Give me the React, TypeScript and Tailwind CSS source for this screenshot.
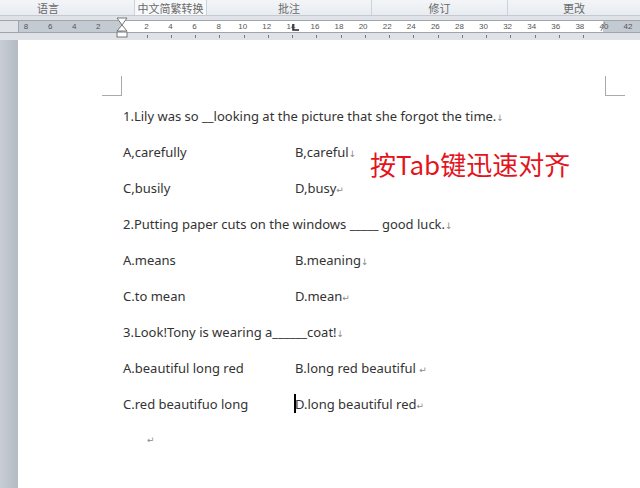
import React from "react";

const groups = [
  { label: "语言", w: "w-[135px]", cls: "justify-start pl-[37px]" },
  { label: "中文简繁转换", w: "w-[72px]", cls: "justify-center bg-[#f7f8fa]" },
  { label: "批注", w: "w-[165px]", cls: "justify-center" },
  { label: "修订", w: "w-[136px]", cls: "justify-center" },
  { label: "更改", w: "w-[132px]", cls: "justify-center" },
];

const leftNums = ["8", "6", "4", "2"];
const rightNums = ["2", "4", "6", "8", "10", "12", "14", "16", "18", "20", "22", "24", "26", "28", "30", "32", "34", "36", "38", "40", "42"];

// formatting marks: manual line break and paragraph end
const BR = () => (
  <span className="text-[9px] text-[#8a8a8a]" style={{ fontFamily: '"DejaVu Sans", sans-serif' }}>↓</span>
);
const PM = () => (
  <span className="text-[9px] text-[#8a8a8a]" style={{ fontFamily: '"DejaVu Sans", sans-serif' }}>↵</span>
);

function Row({ a, b }: { a: React.ReactNode; b?: React.ReactNode }) {
  return (
    <div className="flex h-[36px] items-center whitespace-nowrap">
      <div className={b ? "w-[172px] shrink-0" : ""}>{a}</div>
      {b && <div>{b}</div>}
    </div>
  );
}

export default function App() {
  return (
    <div className="h-[488px] w-[640px] overflow-hidden bg-white" style={{ fontFamily: '"Noto Sans", "Noto Sans CJK SC", sans-serif' }}>
      {/* ribbon group labels */}
      <div className="flex h-[16px] border-b border-[#c5cad1] bg-gradient-to-b from-[#f3f5f8] to-[#e8ecf1] text-[11px] leading-[16px] text-[#6a6a6a]">
        {groups.map((g, i) => (
          <div key={g.label} className={`flex ${g.w} ${g.cls} ${i < groups.length - 1 ? "border-r border-[#cdd2d8]" : ""}`} style={{ fontFamily: '"Noto Sans CJK SC", sans-serif' }}>
            {g.label}
          </div>
        ))}
      </div>

      {/* ruler */}
      <div className="relative h-[24px] bg-[#dfe3e8] pt-[4px]">
        <div className="relative h-[13px] border-y border-[#9ea5ae] text-[8px] leading-[11px] text-[#555]" style={{ fontFamily: '"Liberation Sans", sans-serif' }}>
          <div className="absolute inset-y-0 left-[18px] w-[104px] border-l border-[#9ea5ae] bg-[#c4cad2]" />
          <div className="absolute inset-y-0 left-[122px] w-[481px] bg-white" />
          <div className="absolute inset-y-0 left-[603px] right-0 bg-[#c4cad2]" />
          <div className="absolute inset-0 flex pl-[14px]">
            {leftNums.map((n, i) => (
              <span key={"l" + i} className="w-[24.25px] text-center">{n}</span>
            ))}
            <span className="w-[24.25px]" />
            {rightNums.map((n, i) => (
              <span key={"r" + i} className="w-[24.25px] text-center">{n}</span>
            ))}
          </div>
          {/* indent marker */}
          <svg className="absolute left-[116px] -top-[4px]" width="12" height="22" viewBox="0 0 12 22">
            <path d="M1 1h10L6 8z" fill="#fff" stroke="#777" />
            <path d="M6 8L1 14h10z" fill="#fff" stroke="#777" />
            <rect x="1" y="15" width="10" height="5" fill="#fff" stroke="#777" />
          </svg>
          {/* tab stop */}
          <svg className="absolute left-[292px] top-[3px]" width="8" height="8" viewBox="0 0 8 8">
            <path d="M1 0v6h6" fill="none" stroke="#222" strokeWidth="1.5" />
          </svg>
          <svg className="absolute left-[600px] top-0" width="6" height="11" viewBox="0 0 6 11">
            <path d="M1 10L5 1" stroke="#888" />
          </svg>
        </div>
        {/* small ticks under the ruler */}
        <div className="absolute left-[135px] top-[19px] flex">
          {rightNums.slice(0, 19).map((n) => (
            <span key={"t" + n} className="flex w-[24.25px] justify-center">
              <span className="h-[3px] w-px bg-[#777]" />
            </span>
          ))}
        </div>
      </div>

      {/* document area */}
      <div className="flex h-[448px]">
        <div className="w-[18px] shrink-0 bg-gradient-to-r from-[#c9ced5] to-[#b4bac3]" />
        <div className="relative flex-1 bg-white">
          {/* corner marks */}
          <div className="absolute left-[84px] top-[36px] h-[20px] w-[20px] border-b border-r border-[#aaa]" />
          <div className="absolute left-[587px] top-[36px] h-[20px] w-[20px] border-b border-l border-[#aaa]" />

          <div className="pl-[105px] pt-[59px] text-[13px] text-[#333]">
            <Row a={<span>1.Lily was so __looking at the picture that she forgot the time.<BR /></span>} />
            <div className="relative">
              <Row a="A,carefully" b={<span>B,careful<BR /></span>} />
              <div className="absolute left-[247px] top-[12px] whitespace-nowrap text-[26px] leading-[34px] text-[#e3141d]" style={{ fontFamily: '"Noto Sans CJK SC", sans-serif' }}>
                按Tab键迅速对齐
              </div>
            </div>
            <Row a="C,busily" b={<span>D,busy<PM /></span>} />
            <Row a={<span>2.Putting paper cuts on the windows _____ good luck.<BR /></span>} />
            <Row a="A.means" b={<span>B.meaning<BR /></span>} />
            <Row a="C.to mean" b={<span>D.mean<PM /></span>} />
            <Row a={<span>3.Look!Tony is wearing a______coat!<BR /></span>} />
            <Row a="A.beautiful long red" b={<span>B.long red beautiful <PM /></span>} />
            <Row
              a="C.red beautifuo long"
              b={
                <span className="relative">
                  <span className="absolute -left-[1px] -top-[1px] h-[19px] w-[2px] bg-black" />
                  D.long beautiful red<PM />
                </span>
              }
            />
            <div className="flex h-[36px] items-center pl-[24px]">
              <PM />
            </div>
          </div>
        </div>
      </div>
    </div>
  );
}
